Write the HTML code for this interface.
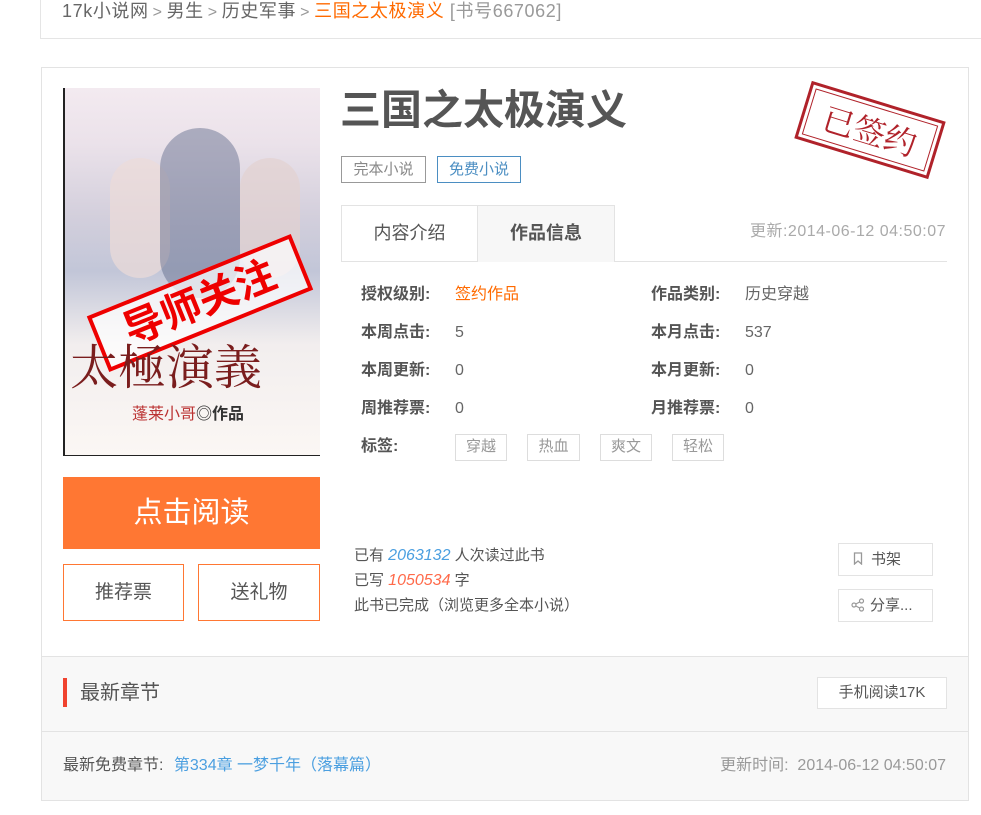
<!DOCTYPE html>
<html><head><meta charset="utf-8"><style>
*{margin:0;padding:0;box-sizing:border-box}
body{width:981px;height:815px;background:#fff;font-family:"Liberation Sans","Noto Sans CJK SC",sans-serif;color:#555;position:relative;overflow:hidden}
.a{position:absolute;white-space:nowrap;line-height:22px}
.lbl{font-weight:bold;font-size:16px;color:#555}
.val{font-size:16px;color:#666}
.tg{position:absolute;border:1px solid #ddd;font-size:15px;color:#999;text-align:center;line-height:24px;height:27px}
.sep{color:#999;font-size:16px;margin:0 4px}
</style></head><body>
<div class="a" style="left:40px;top:-2px;width:941px;height:41px;border-left:1px solid #e5e5e5;border-bottom:1px solid #e5e5e5"></div>
<div class="a" style="left:62px;top:0px;font-size:18px;color:#666;letter-spacing:0.6px">17k小说网<span class="sep">&gt;</span>男生<span class="sep">&gt;</span>历史军事<span class="sep">&gt;</span><span style="color:#ff6a00">三国之太极演义</span> <span style="color:#999">[书号667062]</span></div>

<div class="a" style="left:41px;top:67px;width:928px;height:734px;border:1px solid #e3e3e3;background:#fff"></div>
<div class="a" style="left:42px;top:656px;width:926px;height:144px;background:#f8f8f8;border-top:1px solid #e3e3e3"></div>
<div class="a" style="left:42px;top:731px;width:926px;height:1px;background:#e3e3e3"></div>

<div class="a" style="left:63px;top:88px;width:257px;height:368px;border-left:2px solid #222;border-bottom:1px solid #222;background:linear-gradient(180deg,#f3eaf0 0%,#ebe2ea 15%,#d3cfdc 35%,#c2c6d8 50%,#f2eeee 70%,#fbf7f4 100%);overflow:hidden">
 <div class="a" style="left:45px;top:70px;width:60px;height:120px;border-radius:30px;background:#ecdcd8;opacity:.7"></div>
 <div class="a" style="left:95px;top:40px;width:80px;height:170px;border-radius:40px;background:#5b6688;opacity:.45"></div>
 <div class="a" style="left:175px;top:70px;width:60px;height:120px;border-radius:30px;background:#e3d2d0;opacity:.7"></div>
 <div class="a" style="left:25px;top:185px;width:220px;height:60px;border:4px solid #e00;background:rgba(255,255,255,.7);transform:rotate(-22deg);color:#e00;font-weight:bold;font-size:40px;line-height:52px;text-align:center">导师关注</div>
 <div class="a" style="left:5px;top:248px;font-size:48px;line-height:56px;color:#7a1d1d;font-family:'Noto Serif CJK SC',serif">太極演義</div>
 <div class="a" style="left:67px;top:316px;font-size:16px;color:#b33">蓬莱小哥<span style="color:#333;font-weight:bold">◎作品</span></div>
</div>
<div class="a" style="left:63px;top:477px;width:257px;height:72px;background:#ff7733;color:#fff;font-size:29px;text-align:center;line-height:72px">点击阅读</div>
<div class="a" style="left:63px;top:564px;width:121px;height:57px;border:1px solid #ff7733;font-size:19px;text-align:center;line-height:55px;color:#555">推荐票</div>
<div class="a" style="left:198px;top:564px;width:122px;height:57px;border:1px solid #ff7733;font-size:19px;text-align:center;line-height:55px;color:#555">送礼物</div>

<div class="a" style="left:340px;top:84px;font-size:41px;font-weight:bold;color:#555;line-height:52px">三国之太极演义</div>
<div class="a" style="left:800px;top:100px;width:140px;height:60px;border:3px solid #b0222a;transform:rotate(17deg);outline:1px solid #b0222a;outline-offset:-7px;color:#b0222a;font-size:32px;text-align:center;line-height:54px;font-family:'Noto Serif CJK SC',serif">已签约</div>
<div class="a" style="left:341px;top:156px;width:85px;height:27px;border:1px solid #999;font-size:15px;color:#888;text-align:center;line-height:25px">完本小说</div>
<div class="a" style="left:437px;top:156px;width:84px;height:27px;border:1px solid #4b8ec2;font-size:15px;color:#4b8ec2;text-align:center;line-height:25px">免费小说</div>

<div class="a" style="left:341px;top:205px;width:606px;height:57px;border-bottom:1px solid #e3e3e3"></div>
<div class="a" style="left:341px;top:205px;width:137px;height:57px;border:1px solid #e3e3e3;border-bottom:none;font-size:18px;color:#555;text-align:center;line-height:55px">内容介绍</div>
<div class="a" style="left:477px;top:205px;width:138px;height:57px;border:1px solid #e3e3e3;border-bottom:none;background:#f7f7f7;font-size:18px;font-weight:bold;color:#555;text-align:center;line-height:55px">作品信息</div>
<div class="a" style="right:35px;top:221px;font-size:16px;color:#aaa;letter-spacing:0.5px">更新:2014-06-12 04:50:07</div>

<div class="a lbl" style="left:361px;top:284px">授权级别:</div><div class="a val" style="left:455px;top:284px;color:#ff6a00">签约作品</div>
<div class="a lbl" style="left:651px;top:284px">作品类别:</div><div class="a val" style="left:745px;top:284px">历史穿越</div>
<div class="a lbl" style="left:361px;top:322px">本周点击:</div><div class="a val" style="left:455px;top:322px">5</div>
<div class="a lbl" style="left:651px;top:322px">本月点击:</div><div class="a val" style="left:745px;top:322px">537</div>
<div class="a lbl" style="left:361px;top:360px">本周更新:</div><div class="a val" style="left:455px;top:360px">0</div>
<div class="a lbl" style="left:651px;top:360px">本月更新:</div><div class="a val" style="left:745px;top:360px">0</div>
<div class="a lbl" style="left:361px;top:398px">周推荐票:</div><div class="a val" style="left:455px;top:398px">0</div>
<div class="a lbl" style="left:651px;top:398px">月推荐票:</div><div class="a val" style="left:745px;top:398px">0</div>
<div class="a lbl" style="left:361px;top:436px">标签:</div>
<div class="tg" style="left:455px;top:434px;width:52px">穿越</div>
<div class="tg" style="left:527px;top:434px;width:53px">热血</div>
<div class="tg" style="left:600px;top:434px;width:52px">爽文</div>
<div class="tg" style="left:672px;top:434px;width:52px">轻松</div>

<div class="a" style="left:354px;top:545px;font-size:15px;color:#555">已有 <i style="color:#4b9fe0;font-size:16px">2063132</i> 人次读过此书</div>
<div class="a" style="left:354px;top:570px;font-size:15px;color:#555">已写 <i style="color:#ff6a4a;font-size:16px">1050534</i> 字</div>
<div class="a" style="left:354px;top:595px;font-size:15px;color:#555">此书已完成（浏览更多全本小说）</div>
<div class="a" style="left:838px;top:543px;width:95px;height:33px;border:1px solid #e3e3e3;font-size:15px;line-height:31px;padding-left:14px;color:#555"><svg width="10" height="13" viewBox="0 0 10 13" style="vertical-align:-1px;margin-right:8px"><path d="M1.5 1h7v11l-3.5-3-3.5 3z" fill="none" stroke="#999" stroke-width="1.3"/></svg>书架</div>
<div class="a" style="left:838px;top:589px;width:95px;height:33px;border:1px solid #e3e3e3;font-size:15px;line-height:31px;padding-left:12px;color:#555"><svg width="14" height="14" viewBox="0 0 14 14" style="vertical-align:-2px;margin-right:5px"><circle cx="10.5" cy="3" r="2" fill="none" stroke="#999" stroke-width="1.2"/><circle cx="3" cy="7" r="2" fill="none" stroke="#999" stroke-width="1.2"/><circle cx="10.5" cy="11" r="2" fill="none" stroke="#999" stroke-width="1.2"/><path d="M4.8 6 8.7 4M4.8 8l3.9 2" stroke="#999" stroke-width="1.2"/></svg>分享...</div>

<div class="a" style="left:63px;top:678px;width:4px;height:29px;background:#f0432f"></div>
<div class="a" style="left:80px;top:680px;font-size:20px;color:#555;line-height:26px">最新章节</div>
<div class="a" style="left:817px;top:677px;width:130px;height:32px;border:1px solid #e3e3e3;background:#fff;font-size:15px;text-align:center;line-height:30px;color:#555">手机阅读17K</div>
<div class="a" style="left:63px;top:755px;font-size:16px;color:#555">最新免费章节: <span style="color:#4b9fe0;margin-left:6px">第334章 一梦千年（落幕篇）</span></div>
<div class="a" style="right:35px;top:755px;font-size:16px;color:#999">更新时间: &nbsp;2014-06-12 04:50:07</div>
</body></html>
